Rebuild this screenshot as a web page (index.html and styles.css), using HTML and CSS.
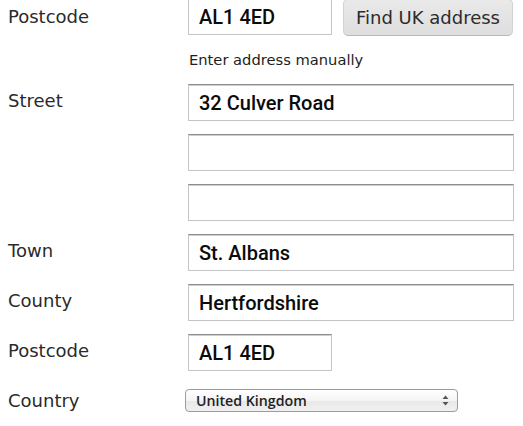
FILE: index.html
```html
<!DOCTYPE html>
<html lang="en">
<head>
<meta charset="utf-8">
<title>Address</title>
<link rel="stylesheet" href="styles.css">
</head>
<body>
<form class="form">
  <label class="label label-first">Postcode</label>
  <div class="field field-inline">
    <input class="input input-short" type="text" value="AL1 4ED">
    <button class="btn" type="button">Find UK address</button>
  </div>

  <span class="spacer"></span>
  <div class="field hint">Enter address manually</div>

  <label class="label">Street</label>
  <div class="field"><input class="input" type="text" value="32 Culver Road"></div>

  <span class="spacer"></span>
  <div class="field"><input class="input" type="text" value=""></div>

  <span class="spacer"></span>
  <div class="field"><input class="input" type="text" value=""></div>

  <label class="label">Town</label>
  <div class="field"><input class="input" type="text" value="St. Albans"></div>

  <label class="label">County</label>
  <div class="field"><input class="input" type="text" value="Hertfordshire"></div>

  <label class="label">Postcode</label>
  <div class="field"><input class="input input-short" type="text" value="AL1 4ED"></div>

  <label class="label label-country">Country</label>
  <div class="field">
    <div class="select">
      <span class="select-text">United Kingdom</span>
      <svg class="select-arrows" width="7" height="11" viewBox="0 0 7 11"><path d="M3.5 0.5 L6.5 4 H0.5 Z" fill="#555"/><path d="M3.5 10.5 L6.5 7 H0.5 Z" fill="#555"/></svg>
    </div>
  </div>
</form>
</body>
</html>
```

FILE: styles.css
```css
html, body {
  margin: 0;
  padding: 0;
  background: #ffffff;
}
body {
  padding: 0 8px;
  font-family: "DejaVu Sans", "Open Sans", sans-serif;
  color: #2b2b2b;
}
.form {
  display: grid;
  grid-template-columns: 180px 326px;
  row-gap: 13px;
  align-items: center;
  margin-top: -2px;
}
.label {
  font-size: 18px;
  color: #2a2a2a;
  line-height: 22px;
  padding-bottom: 3px;
}
.label-first {
  padding-bottom: 0;
}
.label-country {
  padding-bottom: 0;
  padding-top: 5px;
}
.spacer {
  display: block;
}
.field-inline {
  display: flex;
  align-items: flex-start;
  gap: 11px;
}
.input {
  box-sizing: border-box;
  display: block;
  width: 326px;
  height: 37px;
  margin: 0;
  padding: 0 10px;
  border: 1px solid #c4c4c4;
  border-top-color: #8c8c8c;
  box-shadow: inset 0 1px 0 #cfcfcf;
  border-radius: 0;
  background: #fff;
  font-family: Roboto, "Open Sans", sans-serif;
  font-size: 20px;
  font-weight: 500;
  color: #0b0b0b;
  outline: none;
}
.input-short {
  width: 144px;
}
.btn {
  box-sizing: border-box;
  width: 170px;
  height: 37px;
  margin-top: 1px;
  padding: 0;
  border: 1px solid #d2d2d2;
  border-bottom-color: #b8b8b8;
  border-radius: 5px;
  background: linear-gradient(#e9e9e9, #dedede);
  font-family: "DejaVu Sans", "Open Sans", sans-serif;
  font-size: 18px;
  color: #2c2c2c;
}
.hint {
  font-size: 14.7px;
  line-height: 22px;
  color: #1e1e1e;
  padding-left: 1px;
}
.select {
  box-sizing: border-box;
  width: 273px;
  height: 23px;
  margin: 5px 0 0 -3px;
  display: flex;
  align-items: center;
  justify-content: space-between;
  padding: 0 8px 0 10px;
  border: 1px solid #9c9c9c;
  border-radius: 4px;
  background: linear-gradient(#ffffff, #f4f4f4 50%, #e8e8e8 51%, #f0f0f0);
}
.select-text {
  font-family: "Open Sans", "DejaVu Sans", sans-serif;
  font-size: 14.2px;
  font-weight: 600;
  color: #222;
}
.select-arrows {
  display: block;
}
```
